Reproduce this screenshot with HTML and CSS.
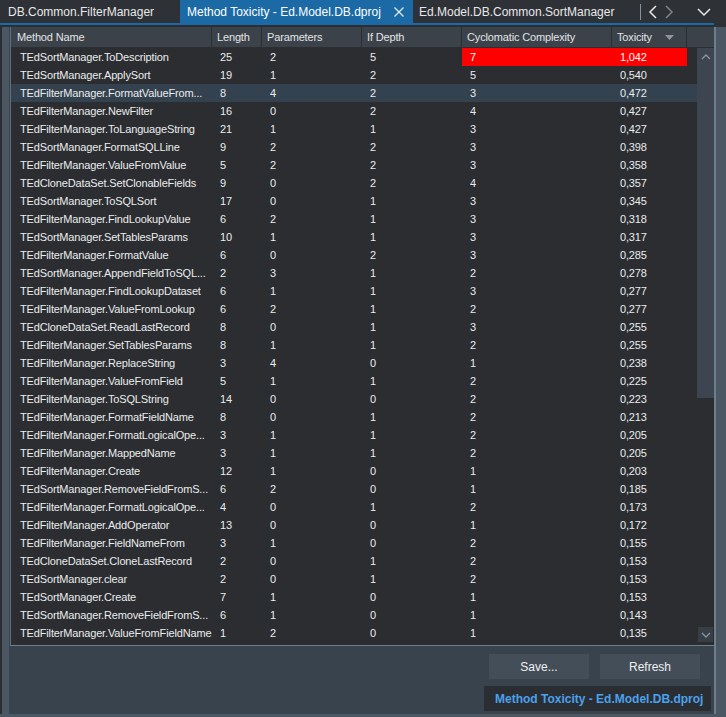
FILE: index.html
```html
<!DOCTYPE html>
<html>
<head>
<meta charset="utf-8">
<link rel="stylesheet" href="styles.css">
</head>
<body>
<div class="app">
  <div class="tabbar">
    <div class="tab first">DB.Common.FilterManager</div>
    <div class="tab active"><span class="tabtext">Method Toxicity - Ed.Model.DB.dproj</span>
      <svg class="close" width="10" height="10" viewBox="0 0 10 10"><path d="M0.5 0.5 L9.5 9.5 M9.5 0.5 L0.5 9.5" stroke="#e6eef5" stroke-width="1.2" fill="none"/></svg>
    </div>
    <div class="tab third">Ed.Model.DB.Common.SortManager</div>
    <div class="tabnav">
      <span class="navsep"></span>
      <svg width="10" height="14" viewBox="0 0 10 14"><path d="M8 1 L2 7 L8 13" stroke="#e8e8e8" stroke-width="1.5" fill="none"/></svg>
      <svg class="dim" width="10" height="14" viewBox="0 0 10 14"><path d="M2 1 L8 7 L2 13" stroke="#7d848c" stroke-width="1.5" fill="none"/></svg>
      <svg class="drop" width="14" height="10" viewBox="0 0 14 10"><path d="M1 2 L7 8 L13 2" stroke="#e8e8e8" stroke-width="1.5" fill="none"/></svg>
    </div>
  </div>
  <div class="tabline"></div>
  <div class="gapline"></div>
  <div class="main">
    <div class="leftstrip"><div class="ls-dark"></div><div class="ls-light"></div></div>
    <div class="panel">
      <div class="grid">
        <div class="ghead">
          <div class="hc">Method Name</div>
          <div class="hc">Length</div>
          <div class="hc">Parameters</div>
          <div class="hc">If Depth</div>
          <div class="hc">Cyclomatic Complexity</div>
          <div class="hc sorted">Toxicity<svg class="sortarrow" width="9" height="5" viewBox="0 0 9 5"><path d="M0 0 L9 0 L4.5 5 Z" fill="#8e949b"/></svg></div>
          <div class="hc filler"></div>
        </div>
        <div class="gbody">
          <div class="rows">
            <div class="row"><span class="c name">TEdSortManager.ToDescription</span><span class="c">25</span><span class="c">2</span><span class="c">5</span><span class="c hot">7</span><span class="c hot tox">1,042</span></div>
            <div class="row"><span class="c name">TEdSortManager.ApplySort</span><span class="c">19</span><span class="c">1</span><span class="c">2</span><span class="c">5</span><span class="c tox">0,540</span></div>
            <div class="row sel"><span class="c name">TEdFilterManager.FormatValueFrom...</span><span class="c">8</span><span class="c">4</span><span class="c">2</span><span class="c">3</span><span class="c tox">0,472</span></div>
            <div class="row"><span class="c name">TEdFilterManager.NewFilter</span><span class="c">16</span><span class="c">0</span><span class="c">2</span><span class="c">4</span><span class="c tox">0,427</span></div>
            <div class="row"><span class="c name">TEdFilterManager.ToLanguageString</span><span class="c">21</span><span class="c">1</span><span class="c">1</span><span class="c">3</span><span class="c tox">0,427</span></div>
            <div class="row"><span class="c name">TEdSortManager.FormatSQLLine</span><span class="c">9</span><span class="c">2</span><span class="c">2</span><span class="c">3</span><span class="c tox">0,398</span></div>
            <div class="row"><span class="c name">TEdFilterManager.ValueFromValue</span><span class="c">5</span><span class="c">2</span><span class="c">2</span><span class="c">3</span><span class="c tox">0,358</span></div>
            <div class="row"><span class="c name">TEdCloneDataSet.SetClonableFields</span><span class="c">9</span><span class="c">0</span><span class="c">2</span><span class="c">4</span><span class="c tox">0,357</span></div>
            <div class="row"><span class="c name">TEdSortManager.ToSQLSort</span><span class="c">17</span><span class="c">0</span><span class="c">1</span><span class="c">3</span><span class="c tox">0,345</span></div>
            <div class="row"><span class="c name">TEdFilterManager.FindLookupValue</span><span class="c">6</span><span class="c">2</span><span class="c">1</span><span class="c">3</span><span class="c tox">0,318</span></div>
            <div class="row"><span class="c name">TEdSortManager.SetTablesParams</span><span class="c">10</span><span class="c">1</span><span class="c">1</span><span class="c">3</span><span class="c tox">0,317</span></div>
            <div class="row"><span class="c name">TEdFilterManager.FormatValue</span><span class="c">6</span><span class="c">0</span><span class="c">2</span><span class="c">3</span><span class="c tox">0,285</span></div>
            <div class="row"><span class="c name">TEdSortManager.AppendFieldToSQL...</span><span class="c">2</span><span class="c">3</span><span class="c">1</span><span class="c">2</span><span class="c tox">0,278</span></div>
            <div class="row"><span class="c name">TEdFilterManager.FindLookupDataset</span><span class="c">6</span><span class="c">1</span><span class="c">1</span><span class="c">3</span><span class="c tox">0,277</span></div>
            <div class="row"><span class="c name">TEdFilterManager.ValueFromLookup</span><span class="c">6</span><span class="c">2</span><span class="c">1</span><span class="c">2</span><span class="c tox">0,277</span></div>
            <div class="row"><span class="c name">TEdCloneDataSet.ReadLastRecord</span><span class="c">8</span><span class="c">0</span><span class="c">1</span><span class="c">3</span><span class="c tox">0,255</span></div>
            <div class="row"><span class="c name">TEdFilterManager.SetTablesParams</span><span class="c">8</span><span class="c">1</span><span class="c">1</span><span class="c">2</span><span class="c tox">0,255</span></div>
            <div class="row"><span class="c name">TEdFilterManager.ReplaceString</span><span class="c">3</span><span class="c">4</span><span class="c">0</span><span class="c">1</span><span class="c tox">0,238</span></div>
            <div class="row"><span class="c name">TEdFilterManager.ValueFromField</span><span class="c">5</span><span class="c">1</span><span class="c">1</span><span class="c">2</span><span class="c tox">0,225</span></div>
            <div class="row"><span class="c name">TEdFilterManager.ToSQLString</span><span class="c">14</span><span class="c">0</span><span class="c">0</span><span class="c">2</span><span class="c tox">0,223</span></div>
            <div class="row"><span class="c name">TEdFilterManager.FormatFieldName</span><span class="c">8</span><span class="c">0</span><span class="c">1</span><span class="c">2</span><span class="c tox">0,213</span></div>
            <div class="row"><span class="c name">TEdFilterManager.FormatLogicalOpe...</span><span class="c">3</span><span class="c">1</span><span class="c">1</span><span class="c">2</span><span class="c tox">0,205</span></div>
            <div class="row"><span class="c name">TEdFilterManager.MappedName</span><span class="c">3</span><span class="c">1</span><span class="c">1</span><span class="c">2</span><span class="c tox">0,205</span></div>
            <div class="row"><span class="c name">TEdFilterManager.Create</span><span class="c">12</span><span class="c">1</span><span class="c">0</span><span class="c">1</span><span class="c tox">0,203</span></div>
            <div class="row"><span class="c name">TEdSortManager.RemoveFieldFromS...</span><span class="c">6</span><span class="c">2</span><span class="c">0</span><span class="c">1</span><span class="c tox">0,185</span></div>
            <div class="row"><span class="c name">TEdFilterManager.FormatLogicalOpe...</span><span class="c">4</span><span class="c">0</span><span class="c">1</span><span class="c">2</span><span class="c tox">0,173</span></div>
            <div class="row"><span class="c name">TEdFilterManager.AddOperator</span><span class="c">13</span><span class="c">0</span><span class="c">0</span><span class="c">1</span><span class="c tox">0,172</span></div>
            <div class="row"><span class="c name">TEdFilterManager.FieldNameFrom</span><span class="c">3</span><span class="c">1</span><span class="c">0</span><span class="c">2</span><span class="c tox">0,155</span></div>
            <div class="row"><span class="c name">TEdCloneDataSet.CloneLastRecord</span><span class="c">2</span><span class="c">0</span><span class="c">1</span><span class="c">2</span><span class="c tox">0,153</span></div>
            <div class="row"><span class="c name">TEdSortManager.clear</span><span class="c">2</span><span class="c">0</span><span class="c">1</span><span class="c">2</span><span class="c tox">0,153</span></div>
            <div class="row"><span class="c name">TEdSortManager.Create</span><span class="c">7</span><span class="c">1</span><span class="c">0</span><span class="c">1</span><span class="c tox">0,153</span></div>
            <div class="row"><span class="c name">TEdSortManager.RemoveFieldFromS...</span><span class="c">6</span><span class="c">1</span><span class="c">0</span><span class="c">1</span><span class="c tox">0,143</span></div>
            <div class="row"><span class="c name">TEdFilterManager.ValueFromFieldName</span><span class="c">1</span><span class="c">2</span><span class="c">0</span><span class="c">1</span><span class="c tox">0,135</span></div>
          </div>
          <div class="vscroll">
            <div class="thumb">
              <svg class="sbarrow" width="10" height="6" viewBox="0 0 10 6"><path d="M1 5 L5 1 L9 5" stroke="#8a96a1" stroke-width="1.3" fill="none"/></svg>
            </div>
            <div class="sbspace"></div>
            <div class="sbdown">
              <svg width="10" height="6" viewBox="0 0 10 6"><path d="M1 1 L5 5 L9 1" stroke="#8a96a1" stroke-width="1.3" fill="none"/></svg>
            </div>
          </div>
        </div>
      </div>
      <div class="actions">
        <button class="btn">Save...</button>
        <button class="btn">Refresh</button>
      </div>
      <div class="btabrow">
        <div class="btab">Method Toxicity - Ed.Model.DB.dproj</div>
      </div>
    </div>
    <div class="rightstrip"></div>
  </div>
  <div class="bottomstrip"></div>
</div>
</body>
</html>
```

FILE: styles.css
```css
* { box-sizing: border-box; }
html, body { margin: 0; padding: 0; }
body {
  background: #2d3034;
  font-family: "Liberation Sans", Arial, sans-serif;
  color: #e4e6e8;
  width: 726px;
  height: 717px;
  overflow: hidden;
}
.app { display: flex; flex-direction: column; height: 717px; }

.tabbar {
  height: 23px;
  display: flex;
  align-items: stretch;
  background: #2e3135;
  font-size: 12px;
}
.tab {
  display: flex;
  align-items: center;
  padding: 0 6px;
  color: #e6e8ea;
  white-space: nowrap;
  flex: none;
}
.tab.first { padding-left: 8px; width: 180px; }
.tab.active {
  background: #1b6aa6;
  color: #ffffff;
  width: 233px;
  padding-left: 7px;
}
.close { margin-left: 13px; flex: none; }
.tab.third { padding-left: 6px; width: 226px; }
.tabnav { display: flex; align-items: center; flex: 1; }
.navsep { width: 1px; height: 16px; background: #8a9096; margin-left: 1px; margin-right: 7px; }
.tabnav .dim { margin-left: 6px; }
.tabnav .drop { margin-left: 23px; }

.tabline { height: 2px; background: #1b6aa6; margin-right: 12px; }
.gapline { height: 2px; background: #2b2e32; margin-right: 12px; }

.main { display: flex; flex: 1; min-height: 0; }
.leftstrip { width: 9px; display: flex; }
.ls-dark { width: 2px; background: #2b2e32; }
.ls-light { width: 7px; background: #4b5762; }
.rightstrip { width: 12px; background: #4b5863; border-left: 2px solid #6d7f8c; }
.bottomstrip { height: 3px; background: #4b5863; }

.panel {
  flex: 1;
  background: #39434d;
  display: flex;
  flex-direction: column;
}
.grid {
  margin-left: 1px;
  border-left: 1px solid #5f6f7b;
  border-bottom: 1px solid #6d7f8c;
  background: #2b2d31;
  font-size: 11px;
  letter-spacing: -0.15px;
}
.ghead {
  height: 21px;
  display: grid;
  grid-template-columns: 201px 50px 100px 100px 150px 75px 1fr;
  background: #3c424a;
  border-bottom: 1px solid #2b2e32;
}
.hc {
  display: flex;
  align-items: center;
  padding-left: 5px;
  border-right: 1px solid #2b2e32;
  color: #e2e4e6;
  white-space: nowrap;
}
.hc:first-child { padding-left: 6px; }
.sortarrow { margin-left: 13px; margin-top: 1px; }
.hc.filler { border-right: none; }

.gbody { display: flex; height: 597px; }
.rows { width: 686px; }
.row {
  height: 18px;
  display: grid;
  grid-template-columns: 201px 50px 100px 100px 150px 75px;
  align-items: center;
}
.row.sel { background: #34414e; }
.c {
  height: 18px;
  line-height: 18px;
  padding-left: 8px;
  white-space: nowrap;
  overflow: hidden;
  color: #eaeced;
}
.c.name { padding-left: 9px; }
.c.hot { background: #ff0000; color: #ffffff; }

.vscroll { width: 17px; display: flex; flex-direction: column; }
.thumb {
  height: 350px;
  background: #3c4550;
  display: flex;
  justify-content: center;
  padding-top: 6px;
}
.sbspace { flex: 1; }
.sbdown {
  height: 15px;
  margin: 0 1px 3px 1px;
  background: #373e46;
  display: flex;
  align-items: center;
  justify-content: center;
}

.actions {
  display: flex;
  justify-content: flex-end;
  gap: 11px;
  padding: 8px 14px 0 0;
}
.btn {
  width: 100px;
  height: 25px;
  border: none;
  background: #434e58;
  color: #eef0f2;
  font-family: "Liberation Sans", Arial, sans-serif;
  font-size: 12px;
  padding: 0;
}
.btabrow {
  display: flex;
  justify-content: flex-end;
  padding: 7px 3px 0 0;
}
.btab {
  width: 227px;
  height: 25px;
  background: #2a2e33;
  color: #4aa1ec;
  font-weight: bold;
  font-size: 12px;
  display: flex;
  align-items: center;
  padding-left: 11px;
  white-space: nowrap;
}
```
